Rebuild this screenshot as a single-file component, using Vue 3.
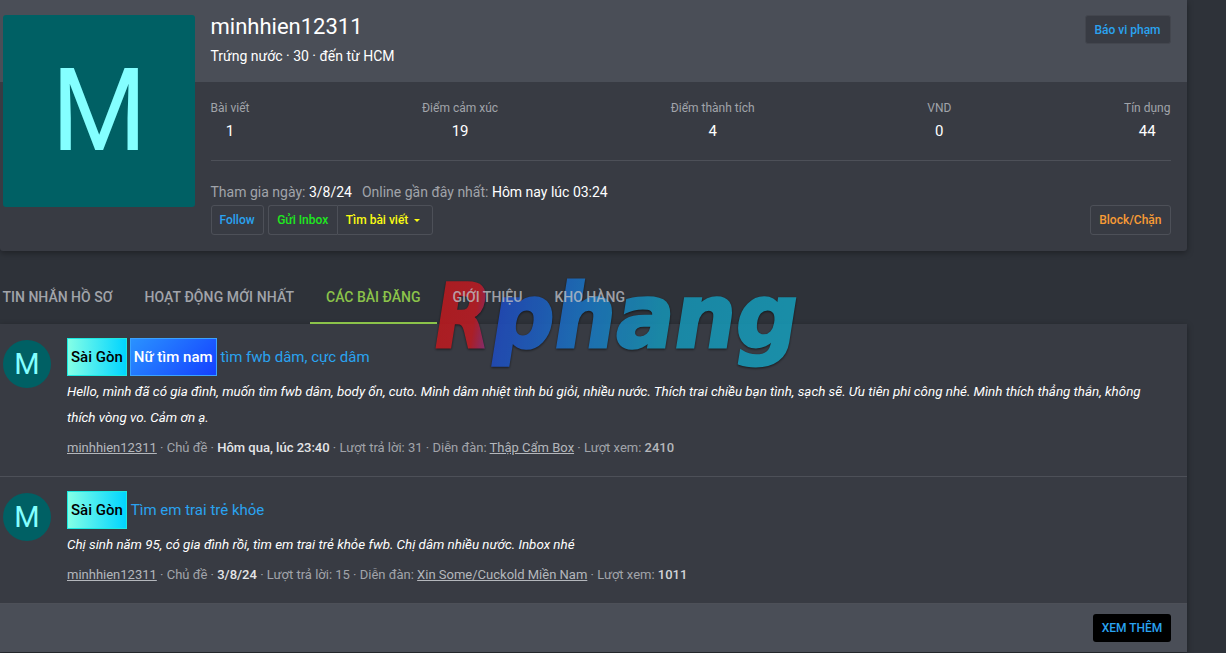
<script setup>
const stats = [
  { label: 'Bài viết', value: 1 },
  { label: 'Điểm cảm xúc', value: 19 },
  { label: 'Điểm thành tích', value: 4 },
  { label: 'VND', value: 0 },
  { label: 'Tín dụng', value: 44 }
]
const tabs = ['Tin nhắn hồ sơ', 'Hoạt động mới nhất', 'Các bài đăng', 'Giới thiệu', 'Kho hàng']
const posts = [
  {
    tags: ['Sài Gòn', 'Nữ tìm nam'],
    title: 'tìm fwb dâm, cực dâm',
    body: 'Hello, mình đã có gia đình, muốn tìm fwb dâm, body ổn, cuto. Mình dâm nhiệt tình bú giỏi, nhiều nước. Thích trai chiều bạn tình, sạch sẽ. Ưu tiên phi công nhé. Mình thích thẳng thắn, không thích vòng vo. Cảm ơn ạ.',
    date: 'Hôm qua, lúc 23:40',
    replies: 31,
    forum: 'Thập Cẩm Box',
    views: 2410,
    viewsClass: 'views-dim'
  },
  {
    tags: ['Sài Gòn'],
    title: 'Tìm em trai trẻ khỏe',
    body: 'Chị sinh năm 95, có gia đình rồi, tìm em trai trẻ khỏe fwb. Chị dâm nhiều nước. Inbox nhé',
    date: '3/8/24',
    replies: 15,
    forum: 'Xin Some/Cuckold Miền Nam',
    views: 1011,
    viewsClass: 'views-mid'
  }
]
</script>

<template>
  <div class="page">
    <section class="profile">
      <div class="avatar-big"><span>M</span></div>
      <div class="profile-top">
        <div>
          <h1 class="name">minhhien12311</h1>
          <div class="sub">Trứng nước · 30 · đến từ HCM</div>
        </div>
        <a class="btn btn-report">Báo vi phạm</a>
      </div>
      <div class="profile-body">
        <div class="stats">
          <div v-for="s in stats" :key="s.label" class="stat">
            <div class="stat-label">{{ s.label }}</div>
            <div class="stat-value">{{ s.value }}</div>
          </div>
        </div>
        <div class="dates">
          Tham gia ngày: <b>3/8/24</b><span class="online">Online gần đây nhất: <b>Hôm nay lúc 03:24</b></span>
        </div>
        <div class="actions">
          <a class="btn blue">Follow</a>
          <div class="btn-group">
            <a class="btn green">Gửi Inbox</a>
            <a class="btn yellow">Tìm bài viết <i class="caret"></i></a>
          </div>
          <a class="btn orange block-btn">Block/Chặn</a>
        </div>
      </div>
    </section>

    <nav class="tabs">
      <a v-for="(t, i) in tabs" :key="t" class="tab" :class="{ active: i === 2 }">{{ t }}</a>
    </nav>

    <section class="posts">
      <article v-for="p in posts" :key="p.title" class="post">
        <div class="avatar-small">M</div>
        <div class="post-main">
          <div class="post-title">
            <span
              v-for="t in p.tags"
              :key="t"
              class="tag"
              :class="t === 'Sài Gòn' ? 'tag-cyan' : 'tag-blue'"
            >{{ t }}</span>
            <a class="title-link">{{ p.title }}</a>
          </div>
          <p class="post-body">{{ p.body }}</p>
          <div class="meta">
            <u>minhhien12311</u> · Chủ đề · <b>{{ p.date }}</b> · Lượt trả lời: {{ p.replies }} · Diễn đàn: <u>{{ p.forum }}</u> · Lượt xem: <b :class="p.viewsClass">{{ p.views }}</b>
          </div>
        </div>
      </article>
      <div class="posts-foot">
        <a class="more">XEM THÊM</a>
      </div>
    </section>

    <svg class="watermark" width="380" height="100" viewBox="0 0 380 100">
      <defs>
        <linearGradient id="wm-r" gradientUnits="userSpaceOnUse" x1="0" y1="0" x2="70" y2="0">
          <stop offset="0" stop-color="#b71a1e" />
          <stop offset="0.65" stop-color="#b81c24" />
          <stop offset="1" stop-color="#6f35a0" />
        </linearGradient>
        <linearGradient id="wm" gradientUnits="userSpaceOnUse" x1="60" y1="0" x2="375" y2="0">
          <stop offset="0" stop-color="#2046ba" />
          <stop offset="0.3" stop-color="#1b72bd" />
          <stop offset="0.55" stop-color="#1790b0" />
          <stop offset="1" stop-color="#1798b4" />
        </linearGradient>
      </defs>
      <g transform="skewX(-9) translate(11 0)">
        <text class="wm-text" x="6" y="67" textLength="54" lengthAdjust="spacingAndGlyphs" fill="url(#wm-r)" stroke="url(#wm-r)">R</text>
        <text class="wm-text" x="64" y="67" textLength="306" lengthAdjust="spacingAndGlyphs" fill="url(#wm)" stroke="url(#wm)">phang</text>
      </g>
    </svg>
  </div>
</template>

<style scoped>
.page {
  position: relative;
  width: 1226px;
  height: 653px;
  overflow: hidden;
  background: #2e3239;
  color: #fff;
  font-family: Roboto, "Liberation Sans", sans-serif;
  font-size: 14px;
}
a { text-decoration: none; }

.profile {
  position: relative;
  width: 1187px;
  height: 251px;
  background: #383b43;
  border-radius: 0 0 3px 3px;
  box-shadow: 0 2px 6px rgba(0, 0, 0, 0.35);
}
.avatar-big {
  position: absolute;
  left: 3px;
  top: 15px;
  width: 192px;
  height: 192px;
  border-radius: 3px;
  background: #006064;
  color: #84ffff;
  font-size: 115px;
  line-height: 192px;
  text-align: center;
}
.avatar-big span {
  display: inline-block;
  transform: scaleX(0.95);
}
.profile-top {
  height: 82px;
  box-sizing: border-box;
  padding: 14px 16.5px 0 210.5px;
  background: #4a4e57;
  display: flex;
  justify-content: space-between;
  align-items: flex-start;
}
.name {
  margin: 0;
  font-size: 22px;
  font-weight: 400;
  line-height: 26px;
}
.sub {
  margin-top: 5px;
  line-height: 22px;
}
.profile-body {
  padding: 16px 16.5px 0 210.5px;
}
.stats {
  display: flex;
  justify-content: space-between;
  height: 62px;
  border-bottom: 1px solid #4d5058;
}
.stat { text-align: center; }
.stat-label {
  font-size: 12px;
  line-height: 20px;
  color: #a1a4aa;
}
.stat-value {
  font-size: 15px;
  line-height: 26px;
}
.dates {
  margin-top: 21px;
  line-height: 20px;
  color: #a1a4aa;
}
.dates b { color: #fff; font-weight: 400; }
.online { margin-left: 10px; }
.actions {
  display: flex;
  gap: 4px;
  margin-top: 3px;
}
.btn {
  display: block;
  box-sizing: border-box;
  height: 30px;
  padding: 0 8px;
  line-height: 28px;
  font-size: 12px;
  font-weight: 500;
  border: 1px solid #4d5058;
  border-radius: 3px;
}
.btn-report {
  height: 29px;
  width: 86px;
  margin-top: 1px;
  padding: 0;
  text-align: center;
  background: #383b43;
  color: #2aa3f0;
  border-color: #43464e;
}
.btn-group { display: flex; }
.btn-group .btn:first-child {
  padding: 0 8.5px;
  border-radius: 3px 0 0 3px;
  border-right: 0;
}
.btn-group .btn:last-child {
  padding: 0 11.5px 0 8px;
  border-radius: 0 3px 3px 0;
}
.blue { color: #2aa3f0; }
.green { color: #1fe81f; }
.yellow { color: #fbfb12; }
.orange { color: #f89b35; }
.block-btn { margin-left: auto; }
.caret {
  display: inline-block;
  margin-left: 3px;
  vertical-align: middle;
  border-top: 3px solid currentColor;
  border-left: 3px solid transparent;
  border-right: 3px solid transparent;
}

.tabs {
  position: relative;
  z-index: 2;
  display: flex;
  width: 1187px;
  height: 73px;
  margin-left: -13.5px;
  align-items: flex-end;
}
.tab {
  height: 56px;
  box-sizing: border-box;
  padding: 20px 16px 0;
  line-height: 18px;
  border-bottom: 2px solid transparent;
  font-size: 14px;
  font-weight: 500;
  text-transform: uppercase;
  color: #a1a4aa;
}
.tab:nth-child(2) { letter-spacing: 0.1px; }
.tab:nth-child(n + 4) { color: rgba(190, 192, 198, 0.8); }
.tab.active {
  color: #8bc34a;
  border-bottom-color: #8bc34a;
}

.posts {
  width: 1187px;
  background: #383b43;
  box-shadow: 0 2px 6px rgba(0, 0, 0, 0.35);
}
.post {
  display: flex;
  gap: 16px;
  padding: 14px 16px 18px 3px;
  border-bottom: 1px solid #4d5058;
}
.avatar-small {
  flex: none;
  width: 48px;
  height: 48px;
  margin-top: 2px;
  border-radius: 50%;
  background: #006064;
  color: #84ffff;
  font-size: 29px;
  line-height: 48px;
  text-align: center;
}
.post-main { flex: 1; min-width: 0; }
.post-title {
  display: flex;
  align-items: center;
  height: 38px;
  gap: 3px;
}
.tag {
  box-sizing: border-box;
  height: 38px;
  padding: 0 3px;
  line-height: 36px;
  font-size: 15px;
  font-weight: 500;
  border: 1px solid;
}
.tag-cyan {
  color: #000;
  background: linear-gradient(90deg, #84ffe6, #00d4ff);
  border-color: #1ce8e0;
}
.tag-blue {
  color: #fff;
  background: linear-gradient(135deg, #2a92ff, #1440ff);
  border-color: #3aa2ff;
}
.title-link {
  margin-left: 1px;
  font-size: 15px;
  color: #2aa3f0;
}
.post-body {
  margin: 3px 0 7px;
  font-size: 13.37px;
  font-style: italic;
  line-height: 26px;
  color: #fff;
}
.meta {
  font-size: 13px;
  line-height: 20px;
  color: #a1a4aa;
}
.meta b { color: #e4e5e7; font-weight: 500; }
.meta .views-dim { color: #b5b7bb; }
.meta .views-mid { color: #d2d4d7; }
.meta u { color: #b4b7bc; }
.posts-foot {
  display: flex;
  justify-content: flex-end;
  height: 48px;
  box-sizing: border-box;
  padding: 10px 16px 0 0;
  background: #4a4e57;
}
.more {
  width: 78px;
  height: 28px;
  line-height: 28px;
  text-align: center;
  font-size: 12px;
  font-weight: 500;
  background: #000;
  color: #2aa3f0;
  border-radius: 3px;
}

/* watermark sits over the tabs background and first post */
.watermark {
  position: absolute;
  z-index: 1;
  left: 424px;
  top: 280px;
  overflow: visible;
  opacity: 0.9;
  filter: drop-shadow(0 1px 1px rgba(0, 0, 0, 0.6));
}
.wm-text {
  font-family: "DejaVu Sans", sans-serif;
  font-weight: 700;
  font-size: 88px;
  stroke-width: 3px;
}
</style>

<style>
body { background: #2e3239; }
</style>
